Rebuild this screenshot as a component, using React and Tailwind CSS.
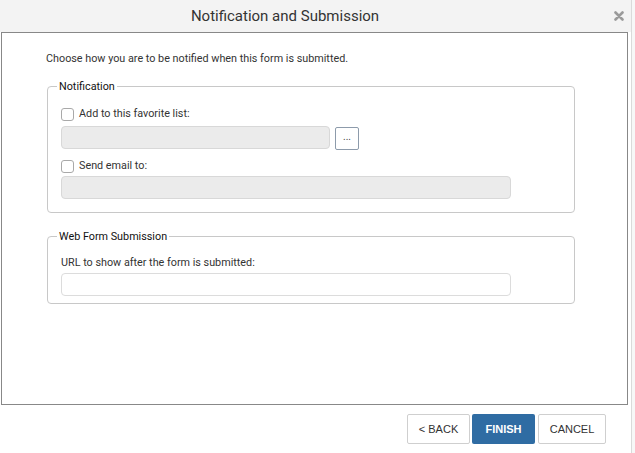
const FONT = "font-['Roboto','Liberation_Sans',sans-serif]"

function Check({ label }) {
  return (
    <label className="flex items-center gap-[5px] h-[14px]">
      <span className="w-[13px] h-[13px] rounded-[3px] border border-[#a9a9a9] bg-white" />
      <span className="text-[10.8px] text-[#333]">{label}</span>
    </label>
  )
}

function Field({ disabled, className }) {
  return (
    <div className={`h-[23px] rounded-[4px] border ${disabled ? 'bg-[#ebebeb] border-[#d8d8d8]' : 'bg-white border-[#dcdcdc]'} ${className}`} />
  )
}

function Group({ title, className, children }) {
  return (
    <fieldset className={`ml-[45px] w-[528px] border border-[#c8c8c8] rounded-[4px] px-[13px] ${className}`}>
      <legend className="ml-[-4px] px-[2px] text-[10.8px] text-[#111] leading-[13px]">{title}</legend>
      {children}
    </fieldset>
  )
}

export default function App() {
  return (
    <div className={`w-[635px] h-[453px] bg-[#f7f7f7] ${FONT}`}>
      <div className="w-[632px] h-[453px] bg-white border-r border-[#dadada] flex flex-col">
        {/* title bar */}
        <div className="h-[32px] bg-[#f3f3f3] flex items-center shrink-0">
          <div className="w-[570px] text-center text-[15px] text-[#333]">Notification and Submission</div>
          <svg width="10" height="10" viewBox="0 0 10 10" className="ml-[44px]">
            <path d="M1.5 1.5 L8.5 8.5 M8.5 1.5 L1.5 8.5" stroke="#9a9a9a" strokeWidth="2.6" strokeLinecap="round" />
          </svg>
        </div>

        {/* body */}
        <div className="ml-[1px] w-[627px] h-[373px] border border-[#888] shrink-0">
          <p className="mt-[19px] ml-[44px] text-[10.8px] text-[#333] leading-[13px]">
            Choose how you are to be notified when this form is submitted.
          </p>

          <div className="mt-[15px]">
            <Group title="Notification" className="pb-[13px]">
              <div className="mt-[14px]">
                <Check label="Add to this favorite list:" />
              </div>
              <div className="mt-[3px] flex items-center gap-[5px]">
                <Field disabled className="w-[269px]" />
                <button className="mt-[3px] w-[24px] h-[23px] rounded-[2px] border border-[#8d9bab] bg-white text-[10px] text-[#444] leading-none pb-[3px]">...</button>
              </div>
              <div className="mt-[9px]">
                <Check label="Send email to:" />
              </div>
              <div className="mt-[3px]">
                <Field disabled className="w-[450px]" />
              </div>
            </Group>
          </div>

          <div className="mt-[17px]">
            <Group title="Web Form Submission" className="pb-[7px]">
              <p className="mt-[13px] text-[10.8px] text-[#333] leading-[13px]">URL to show after the form is submitted:</p>
              <div className="mt-[4px]">
                <Field className="w-[450px]" />
              </div>
            </Group>
          </div>
        </div>

        {/* footer */}
        <div className="mt-[9px] flex justify-end pr-[25px] font-['Liberation_Sans',Arial,sans-serif] text-[11px]">
          <button className="w-[63px] h-[30px] rounded-[2px] border border-[#cfcfcf] bg-white text-[#333]">&lt; BACK</button>
          <button className="ml-[2px] w-[63px] h-[30px] rounded-[2px] bg-[#2f6ca3] text-white font-bold">FINISH</button>
          <button className="ml-[3px] w-[68px] h-[30px] rounded-[2px] border border-[#cfcfcf] bg-white text-[#333]">CANCEL</button>
        </div>
      </div>
    </div>
  )
}
